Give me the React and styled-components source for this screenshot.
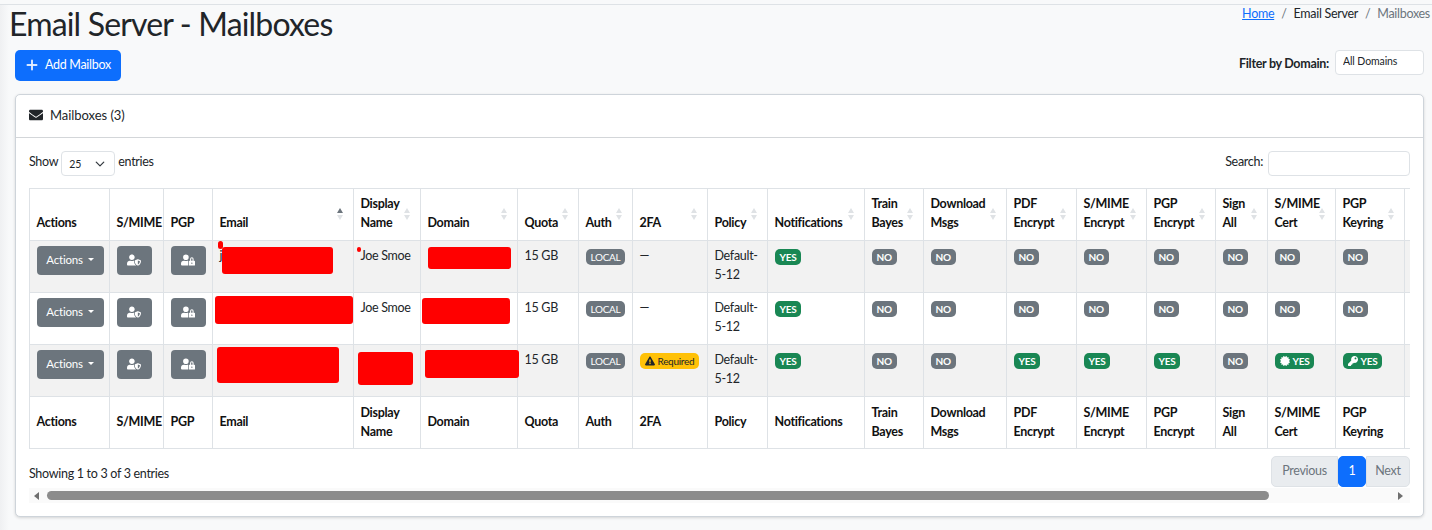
import React from 'react';
import styled, { createGlobalStyle } from 'styled-components';
import { FaEnvelope, FaUserShield, FaUserLock, FaExclamationTriangle, FaCertificate, FaKey } from 'react-icons/fa';
import { BsPlusLg } from 'react-icons/bs';

const FONT = `Lato, "Noto Sans", sans-serif`;

const GlobalStyle = createGlobalStyle`
  html, body { margin: 0; padding: 0; background: #f8f9fa; }
  body { font-family: ${FONT}; font-size: 12.5px; letter-spacing: -0.3px; color: #212529; }
  * { box-sizing: border-box; }
`;

const Page = styled.div`
  height: 526px;
  overflow: hidden;
  margin-top: 4px;
  border-top: 1px solid #dee2e6;
  background: linear-gradient(90deg, #eff0f2 0, #f8f9fa 9px);
  padding: 0 8px 0 15px;
`;

const TitleBar = styled.div`
  display: flex;
  justify-content: space-between;
  align-items: flex-start;
  margin-left: -6px;
  margin-right: -6px;
  height: 45px;
`;

const Title = styled.h1`
  margin: -1px 0 0;
  font-size: 32px;
  font-weight: 400;
  line-height: 39px;
  letter-spacing: -0.83px;
`;

const Breadcrumb = styled.nav`
  display: flex;
  gap: 7px;
  font-size: 12.5px;
  line-height: 18px;
  color: #212529;
`;

const Crumb = styled.span`
  color: ${(p) => (p.$muted ? '#6c757d' : 'inherit')};
`;

const CrumbLink = styled.a`
  color: #0d6efd;
  text-decoration: underline;
`;

const Toolbar = styled.div`
  display: flex;
  justify-content: space-between;
  align-items: flex-start;
  height: 44px;
`;

const AddButton = styled.button`
  display: inline-flex;
  align-items: center;
  gap: 6px;
  height: 31px;
  width: 106px;
  padding: 0 0 2px 10px;
  border: 0;
  border-radius: 5px;
  background: #0d6efd;
  color: #fff;
  font: 400 12.5px ${FONT};
  letter-spacing: -0.3px;

  svg { stroke: #fff; stroke-width: 0.8px; }
`;

const DomainFilter = styled.label`
  display: flex;
  align-items: flex-start;
  gap: 6px;
  font-weight: 700;
  line-height: 28px;
`;

const DomainSelect = styled.select`
  appearance: none;
  width: 89px;
  height: 25px;
  padding: 0 0 4px 7px;
  border: 1px solid #dee2e6;
  border-radius: 4px;
  background: #fff;
  color: #212529;
  font: 400 10.5px ${FONT};
  letter-spacing: -0.1px;
`;

const Card = styled.section`
  width: 1409px;
  border: 1px solid #ced4da;
  border-radius: 5px;
  background: #fff;
  box-shadow: 0 1px 3px rgba(0, 0, 0, 0.15);
`;

const CardHeader = styled.header`
  display: flex;
  align-items: center;
  gap: 7px;
  height: 43px;
  padding: 0 0 2px 13px;
  border-bottom: 1px solid #d3d6d9;
  font-size: 13px;
  letter-spacing: -0.05px;
`;

const CardBody = styled.div`
  padding: 13px;
`;

const TableControls = styled.div`
  display: flex;
  justify-content: space-between;
  align-items: center;
  height: 25px;
  margin-bottom: 12px;
`;

const ControlLabel = styled.label`
  display: flex;
  align-items: flex-start;
  gap: 3px;
  line-height: 21px;
`;

const LengthSelect = styled.select`
  appearance: none;
  width: 54px;
  height: 25px;
  padding: 0 0 0 7px;
  border: 1px solid #dee2e6;
  border-radius: 4px;
  color: #212529;
  font: 400 10.5px ${FONT};
  background: #fff url("data:image/svg+xml,%3csvg xmlns='http://www.w3.org/2000/svg' viewBox='0 0 16 16'%3e%3cpath fill='none' stroke='%23343a40' stroke-linecap='round' stroke-linejoin='round' stroke-width='2' d='m2 5 6 6 6-6'/%3e%3c/svg%3e") no-repeat right 9px center / 10px 10px;
`;

const SearchInput = styled.input`
  width: 142px;
  height: 25px;
  margin-left: 2px;
  border: 1px solid #dee2e6;
  border-radius: 4px;
  background: #fff;
`;

const TableClip = styled.div`
  overflow: hidden;
`;

const Table = styled.table`
  table-layout: fixed;
  width: 1489px;
  border-collapse: collapse;
  line-height: 19px;
`;

const HeadCell = styled.th`
  position: relative;
  height: 52px;
  padding: ${(p) => (p.$foot ? '5px 6.5px 7px' : '5px 6.5px 8px')};
  border: 1px solid #dee2e6;
  text-align: left;
  vertical-align: ${(p) => (p.$foot ? 'middle' : 'bottom')};
  font-weight: 700;
  color: #111;
  white-space: nowrap;

  ${(p) => p.$sort && `
    &::before, &::after {
      content: '';
      position: absolute;
      right: 10px;
      border-left: 3.5px solid transparent;
      border-right: 3.5px solid transparent;
    }
    &::before {
      top: 19px;
      border-bottom: 5.5px solid ${p.$sort === 'asc' ? '#6c757d' : '#dfe2e5'};
    }
    &::after {
      top: 26px;
      border-top: 5.5px solid #dfe2e5;
    }
  `}
`;

const BodyRow = styled.tr`
  background: ${(p) => (p.$striped ? '#f2f2f2' : '#fff')};
`;

const Cell = styled.td`
  position: relative;
  height: 52px;
  padding: 5px 6.5px 6px;
  border: 1px solid #dee2e6;
  vertical-align: top;
  white-space: nowrap;
`;

const GreyButton = styled.button`
  display: inline-flex;
  align-items: center;
  justify-content: center;
  gap: 5px;
  width: ${(p) => p.$width}px;
  height: 29px;
  padding: 0 0 2px;
  border: 0;
  border-radius: 4px;
  background: #6c757d;
  color: #fff;
  font: 400 11.5px ${FONT};
  letter-spacing: -0.2px;
`;

const Caret = styled.span`
  border-top: 3.5px solid #fff;
  border-left: 3.5px solid transparent;
  border-right: 3.5px solid transparent;
`;

const Badge = styled.span`
  display: inline-flex;
  align-items: center;
  gap: 3px;
  height: 16px;
  margin-top: 3px;
  padding: 0 5px 1px;
  border-radius: 5px;
  background: ${(p) => p.$bg};
  color: ${(p) => p.$fg || '#fff'};
  font-size: 10px;
  font-weight: ${(p) => p.$weight || 700};
  line-height: 16px;
  letter-spacing: -0.3px;
  vertical-align: top;
  white-space: nowrap;
`;

const Redaction = styled.div`
  position: absolute;
  left: ${(p) => p.$x}px;
  top: ${(p) => p.$y}px;
  width: ${(p) => p.$w}px;
  height: ${(p) => p.$h}px;
  border-radius: ${(p) => p.$r || 3}px;
  background: #f00;
  z-index: 1;
`;

const TableFooter = styled.div`
  display: flex;
  justify-content: space-between;
  align-items: flex-start;
  padding-top: 7px;
`;

const EntryCount = styled.div`
  padding-top: 10px;
`;

const Pagination = styled.nav`
  display: flex;
  height: 31px;
`;

const PageLink = styled.a`
  display: flex;
  align-items: center;
  justify-content: center;
  width: ${(p) => p.$width}px;
  padding-bottom: 3px;
  background: ${(p) => (p.$active ? '#0d6efd' : '#e9ecef')};
  color: ${(p) => (p.$active ? '#fff' : '#6c757d')};
  border: 1px solid ${(p) => (p.$active ? '#0d6efd' : '#dee2e6')};
  border-radius: ${(p) => p.$radius};
`;

const ScrollBar = styled.div`
  display: flex;
  align-items: center;
  height: 15px;
  margin-top: 1px;
  background: #fafafa;
`;

const ScrollArrow = styled.span`
  width: 0;
  height: 0;
  border-top: 4px solid transparent;
  border-bottom: 4px solid transparent;
  ${(p) => (p.$right ? 'border-left: 5px solid #6f6f6f; margin-left: 129px;' : 'border-right: 5px solid #6f6f6f; margin: 0 8px 0 5px;')}
`;

const ScrollThumb = styled.div`
  width: 1222px;
  height: 9px;
  border-radius: 5px;
  background: #8c8c8c;
`;

const COLUMNS = [
  { key: 'actions', label: ['Actions'], width: 80 },
  { key: 'smimeBtn', label: ['S/MIME'], width: 54 },
  { key: 'pgpBtn', label: ['PGP'], width: 49 },
  { key: 'email', label: ['Email'], width: 141, sort: 'asc' },
  { key: 'name', label: ['Display', 'Name'], width: 67, sort: 'none' },
  { key: 'domain', label: ['Domain'], width: 97, sort: 'none' },
  { key: 'quota', label: ['Quota'], width: 61, sort: 'none' },
  { key: 'auth', label: ['Auth'], width: 54, sort: 'none' },
  { key: 'twofa', label: ['2FA'], width: 75, sort: 'none' },
  { key: 'policy', label: ['Policy'], width: 60, sort: 'none' },
  { key: 'notifications', label: ['Notifications'], width: 97, sort: 'none' },
  { key: 'bayes', label: ['Train', 'Bayes'], width: 59, sort: 'none' },
  { key: 'download', label: ['Download', 'Msgs'], width: 83, sort: 'none' },
  { key: 'pdf', label: ['PDF', 'Encrypt'], width: 70, sort: 'none' },
  { key: 'smimeEnc', label: ['S/MIME', 'Encrypt'], width: 70, sort: 'none' },
  { key: 'pgpEnc', label: ['PGP', 'Encrypt'], width: 69, sort: 'none' },
  { key: 'sign', label: ['Sign', 'All'], width: 52, sort: 'none' },
  { key: 'cert', label: ['S/MIME', 'Cert'], width: 68, sort: 'none' },
  { key: 'keyring', label: ['PGP', 'Keyring'], width: 69, sort: 'none' },
  { key: 'extra', label: [''], width: 114 },
];

const ROWS = [
  {
    email: 'j',
    name: 'Joe Smoe',
    twofa: false,
    flags: [false, false, false, false, false, false],
    cert: false,
    keyring: false,
    emailMarks: [
      { x: 9, y: 6, w: 111, h: 27 },
      { x: 5, y: 0, w: 5, h: 8, r: 3 },
    ],
    nameMarks: [{ x: 3, y: 6, w: 4, h: 5, r: 2 }],
    domainMarks: [{ x: 7, y: 6, w: 83, h: 22 }],
  },
  {
    email: '',
    name: 'Joe Smoe',
    twofa: false,
    flags: [false, false, false, false, false, false],
    cert: false,
    keyring: false,
    emailMarks: [{ x: 2, y: 3, w: 138, h: 28 }],
    nameMarks: [],
    domainMarks: [{ x: 1, y: 5, w: 88, h: 26 }],
  },
  {
    email: '',
    name: '',
    twofa: true,
    flags: [false, false, true, true, true, false],
    cert: true,
    keyring: true,
    emailMarks: [{ x: 4, y: 2, w: 122, h: 36 }],
    nameMarks: [{ x: 4, y: 7, w: 55, h: 33 }],
    domainMarks: [{ x: 4, y: 5, w: 94, h: 28 }],
  },
];

function YesNo({ value, icon }) {
  if (!value) return <Badge $bg="#6c757d">NO</Badge>;
  return <Badge $bg="#198754">{icon}YES</Badge>;
}

function HeaderLabel({ lines }) {
  return lines.map((line, i) => (
    <React.Fragment key={line + i}>
      {i > 0 && <br />}
      {line}
    </React.Fragment>
  ));
}

function Marks({ items }) {
  return items.map((m, i) => <Redaction key={i} $x={m.x} $y={m.y} $w={m.w} $h={m.h} $r={m.r} />);
}

function MailboxRow({ row, striped }) {
  return (
    <BodyRow $striped={striped}>
      <Cell><GreyButton $width={67}>Actions <Caret /></GreyButton></Cell>
      <Cell><GreyButton $width={35}><FaUserShield size={14} /></GreyButton></Cell>
      <Cell><GreyButton $width={35}><FaUserLock size={14} /></GreyButton></Cell>
      <Cell>{row.email}<Marks items={row.emailMarks} /></Cell>
      <Cell>{row.name}<Marks items={row.nameMarks} /></Cell>
      <Cell><Marks items={row.domainMarks} /></Cell>
      <Cell>15 GB</Cell>
      <Cell><Badge $bg="#6c757d" $weight={400}>LOCAL</Badge></Cell>
      <Cell>
        {row.twofa
          ? <Badge $bg="#ffc107" $fg="#212529" $weight={400}><FaExclamationTriangle size={10} />Required</Badge>
          : '—'}
      </Cell>
      <Cell>Default-<br />5-12</Cell>
      <Cell><YesNo value /></Cell>
      {row.flags.map((flag, i) => <Cell key={i}><YesNo value={flag} /></Cell>)}
      <Cell><YesNo value={row.cert} icon={<FaCertificate size={10} />} /></Cell>
      <Cell><YesNo value={row.keyring} icon={<FaKey size={10} />} /></Cell>
      <Cell />
    </BodyRow>
  );
}

export default function App() {
  return (
    <Page>
      <GlobalStyle />
      <TitleBar>
        <Title>Email Server - Mailboxes</Title>
        <Breadcrumb>
          <CrumbLink href="#">Home</CrumbLink>
          <Crumb $muted>/</Crumb>
          <Crumb>Email Server</Crumb>
          <Crumb $muted>/</Crumb>
          <Crumb $muted>Mailboxes</Crumb>
        </Breadcrumb>
      </TitleBar>

      <Toolbar>
        <AddButton><BsPlusLg size={14} /> Add Mailbox</AddButton>
        <DomainFilter>
          Filter by Domain:
          <DomainSelect><option>All Domains</option></DomainSelect>
        </DomainFilter>
      </Toolbar>

      <Card>
        <CardHeader><FaEnvelope size={14} /> Mailboxes (3)</CardHeader>
        <CardBody>
          <TableControls>
            <ControlLabel>
              Show
              <LengthSelect><option>25</option></LengthSelect>
              entries
            </ControlLabel>
            <ControlLabel>
              Search:
              <SearchInput type="search" />
            </ControlLabel>
          </TableControls>

          <TableClip>
            <Table>
              <colgroup>
                {COLUMNS.map((c) => <col key={c.key} width={c.width} />)}
              </colgroup>
              <thead>
                <tr>
                  {COLUMNS.map((c) => (
                    <HeadCell key={c.key} $sort={c.sort}><HeaderLabel lines={c.label} /></HeadCell>
                  ))}
                </tr>
              </thead>
              <tbody>
                {ROWS.map((row, i) => <MailboxRow key={i} row={row} striped={i % 2 === 0} />)}
              </tbody>
              <tfoot>
                <tr>
                  {COLUMNS.map((c) => (
                    <HeadCell key={c.key} $foot><HeaderLabel lines={c.label} /></HeadCell>
                  ))}
                </tr>
              </tfoot>
            </Table>
          </TableClip>

          <TableFooter>
            <EntryCount>Showing 1 to 3 of 3 entries</EntryCount>
            <Pagination>
              <PageLink $width={67} $radius="5px 0 0 5px">Previous</PageLink>
              <PageLink $width={28} $radius="5px" $active>1</PageLink>
              <PageLink $width={44} $radius="0 5px 5px 0">Next</PageLink>
            </Pagination>
          </TableFooter>
          <ScrollBar>
            <ScrollArrow />
            <ScrollThumb />
            <ScrollArrow $right />
          </ScrollBar>
        </CardBody>
      </Card>
    </Page>
  );
}
